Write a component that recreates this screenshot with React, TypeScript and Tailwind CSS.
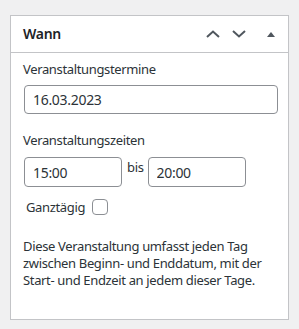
import React from 'react';

const font = { fontFamily: '"Noto Sans", "Open Sans", sans-serif' };

function ChevronUp() {
  return (
    <svg width="14" height="10" viewBox="0 0 14 10" fill="none">
      <path d="M1 8 L7 2.5 L13 8" stroke="#50575e" strokeWidth="2" />
    </svg>
  );
}

function ChevronDown() {
  return (
    <svg width="14" height="10" viewBox="0 0 14 10" fill="none">
      <path d="M1 2 L7 7.5 L13 2" stroke="#50575e" strokeWidth="2" />
    </svg>
  );
}

function Triangle() {
  return (
    <svg width="10" height="8" viewBox="0 0 10 8">
      <path d="M1 7 L5 2 L9 7 Z" fill="#50575e" />
    </svg>
  );
}

export default function App() {
  return (
    <div className="w-[299px] h-[329px] bg-[#f0f0f1] pt-[15px] px-[10px]" style={font}>
      <div className="bg-white border border-[#c3c4c7] h-[305px]">
        {/* Header */}
        <div className="flex items-center h-[37px] border-b border-[#c3c4c7] pl-[12px] pr-[12px]">
          <h2 className="flex-1 text-[14px] font-semibold text-[#1d2327] leading-none tracking-[-0.3px]">Wann</h2>
          <div className="flex items-center">
            <span className="w-[26px] flex justify-center"><ChevronUp /></span>
            <span className="w-[26px] flex justify-center"><ChevronDown /></span>
            <span className="w-[24px] flex justify-end"><Triangle /></span>
          </div>
        </div>

        {/* Body */}
        <div className="px-[12px] pt-[6px] text-[13px] text-[#2c3338] tracking-[-0.35px]">
          <div className="leading-[20px]">Veranstaltungstermine</div>
          <input
            readOnly
            value="16.03.2023"
            className="mt-[6px] ml-[1px] w-[254px] h-[29px] rounded-[4px] border border-[#8c8f94] px-[8px] text-[14px] text-[#2c3338] outline-none tracking-[-0.3px]"
            style={font}
          />

          <div className="mt-[16px] leading-[20px]">Veranstaltungszeiten</div>
          <div className="mt-[7px] ml-[1px] flex items-start">
            <input
              readOnly
              value="15:00"
              className="w-[98px] h-[30px] rounded-[4px] border border-[#8c8f94] px-[8px] text-[14px] text-[#2c3338] outline-none tracking-[-0.3px]"
              style={font}
            />
            <span className="ml-[5px] mr-[4px] leading-[20px]">bis</span>
            <input
              readOnly
              value="20:00"
              className="w-[98px] h-[30px] rounded-[4px] border border-[#8c8f94] px-[8px] text-[14px] text-[#2c3338] outline-none tracking-[-0.3px]"
              style={font}
            />
          </div>

          <div className="mt-[10px] ml-[3px] flex items-center">
            <span className="leading-[20px]">Ganztägig</span>
            <span className="ml-[7px] w-[16px] h-[16px] rounded-[4px] border border-[#8c8f94] bg-white" />
          </div>

          <p className="mt-[21px] leading-[17px]">
            Diese Veranstaltung umfasst jeden Tag zwischen Beginn- und Enddatum, mit der Start- und Endzeit an jedem dieser Tage.
          </p>
        </div>
      </div>
    </div>
  );
}
